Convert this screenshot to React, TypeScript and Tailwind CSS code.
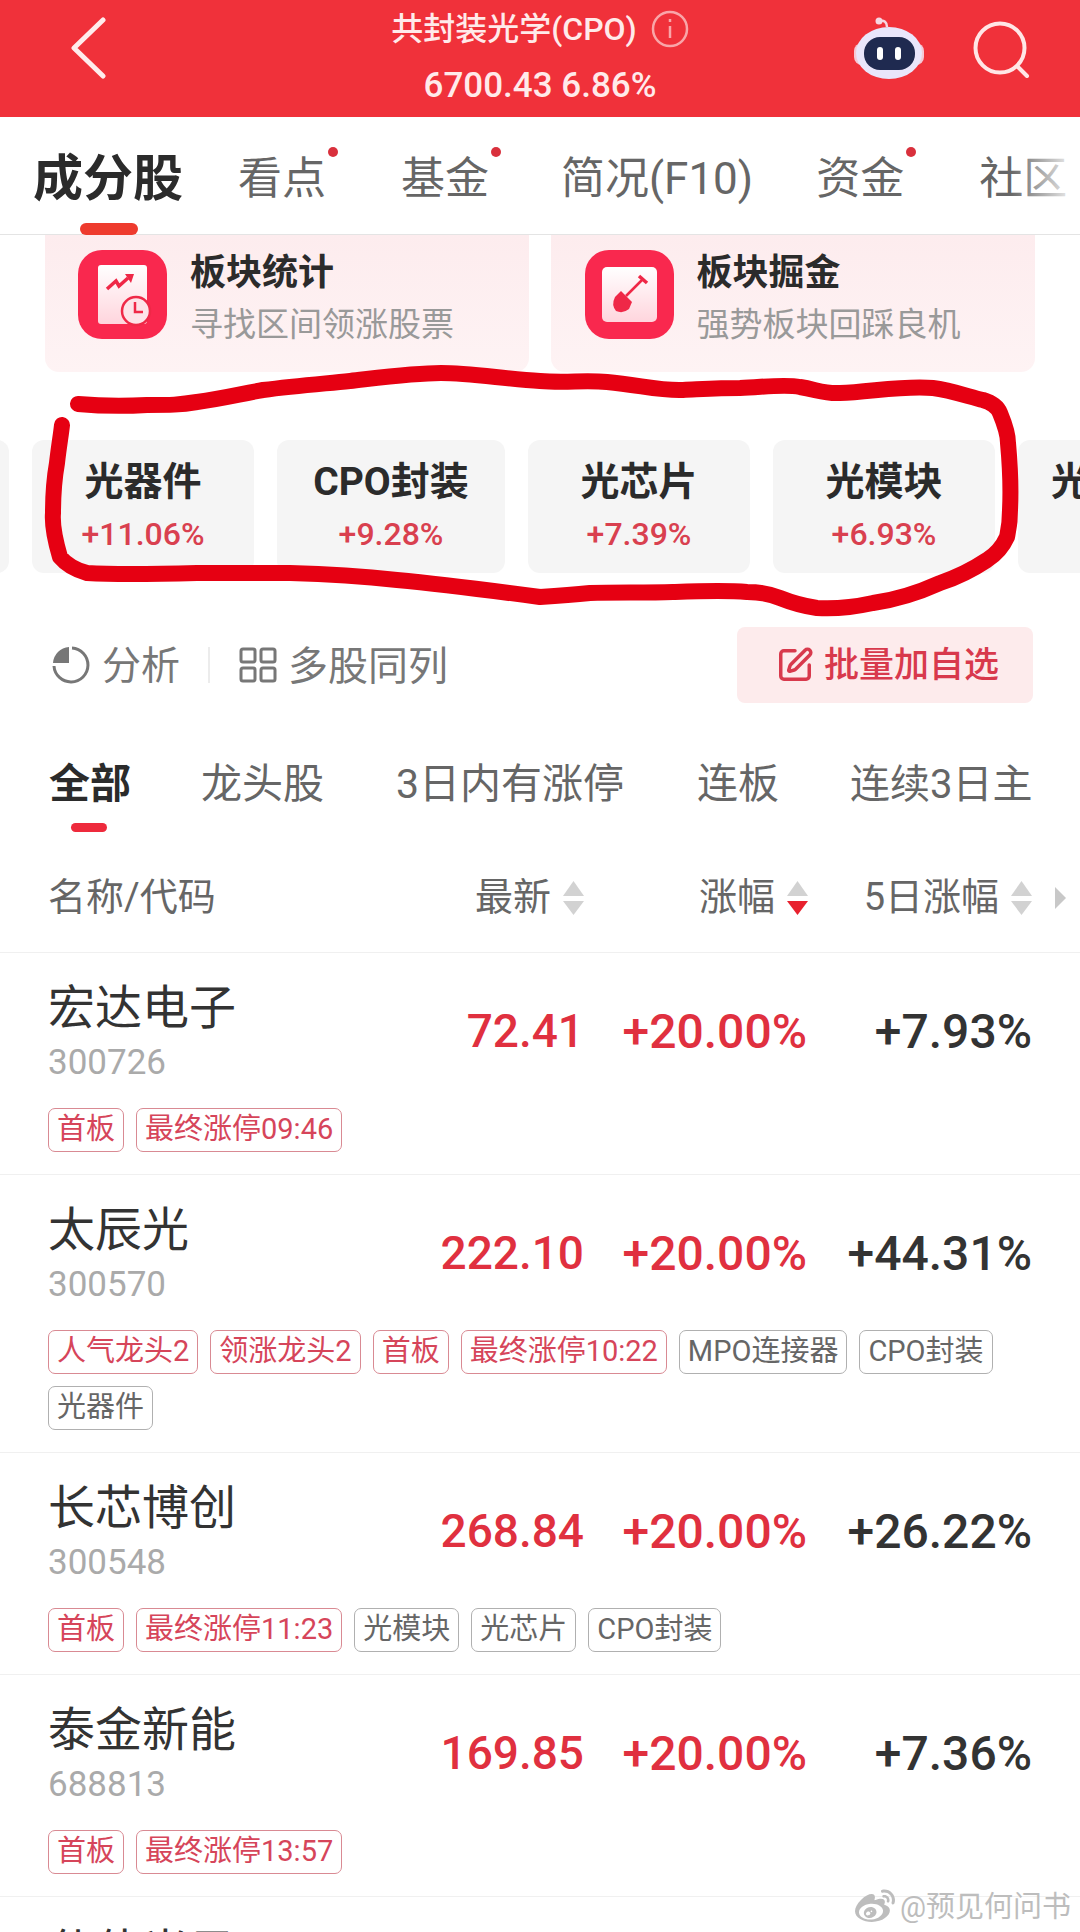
import React from 'react';
import { SquarePen } from 'lucide-react';
import { FaWeibo } from 'react-icons/fa';

type Tag = { label: string; hot?: boolean };
type Stock = { name: string; code: string; price: string; change: string; five: string; tags: Tag[] };

const CHIPS = [
  { name: '光器件', pct: '+11.06%', width: 'w-[222px]' },
  { name: 'CPO封装', pct: '+9.28%', width: 'w-[228px]' },
  { name: '光芯片', pct: '+7.39%', width: 'w-[222px]' },
  { name: '光模块', pct: '+6.93%', width: 'w-[222px]' },
];

const STOCKS: Stock[] = [
  {
    name: '宏达电子', code: '300726', price: '72.41', change: '+20.00%', five: '+7.93%',
    tags: [{ label: '首板', hot: true }, { label: '最终涨停09:46', hot: true }],
  },
  {
    name: '太辰光', code: '300570', price: '222.10', change: '+20.00%', five: '+44.31%',
    tags: [
      { label: '人气龙头2', hot: true }, { label: '领涨龙头2', hot: true }, { label: '首板', hot: true },
      { label: '最终涨停10:22', hot: true }, { label: 'MPO连接器' }, { label: 'CPO封装' }, { label: '光器件' },
    ],
  },
  {
    name: '长芯博创', code: '300548', price: '268.84', change: '+20.00%', five: '+26.22%',
    tags: [
      { label: '首板', hot: true }, { label: '最终涨停11:23', hot: true },
      { label: '光模块' }, { label: '光芯片' }, { label: 'CPO封装' },
    ],
  },
  {
    name: '泰金新能', code: '688813', price: '169.85', change: '+20.00%', five: '+7.36%',
    tags: [{ label: '首板', hot: true }, { label: '最终涨停13:57', hot: true }],
  },
];

const RobotIcon = () => (
  <svg width="70" height="62" viewBox="0 0 70 62" fill="none">
    <path d="M33 10 C33 5 30 3 26 4" stroke="#f6d7e2" strokeWidth="2.5" />
    <circle cx="25" cy="4" r="3.5" fill="#f6d7e2" />
    <rect x="0" y="26" width="70" height="22" rx="8" fill="#f5c9d6" />
    <ellipse cx="35" cy="36" rx="33" ry="26" fill="#e9e6fb" />
    <rect x="10" y="20" width="51" height="33" rx="16" fill="#1f2a50" />
    <rect x="23" y="30" width="6" height="13" rx="3" fill="#ffffff" />
    <rect x="41" y="30" width="6" height="13" rx="3" fill="#ffffff" />
  </svg>
);

const SearchIcon = () => (
  <svg width="58" height="58" viewBox="0 0 58 58" fill="none" stroke="#ffe6e6" strokeWidth="4" strokeLinecap="round">
    <circle cx="27" cy="27" r="24.5" />
    <path d="M45 46 L54 55" />
  </svg>
);

const StatIcon = () => (
  <svg width="89" height="89" viewBox="0 0 89 89" fill="none">
    <defs>
      <linearGradient id="stat-doc" x1="0" y1="0" x2="0" y2="1">
        <stop offset="0" stopColor="#ffffff" />
        <stop offset="1" stopColor="#ffd5dd" />
      </linearGradient>
    </defs>
    <rect width="89" height="89" rx="24" fill="#f9284e" />
    <rect x="20" y="15" width="49" height="59" rx="3" fill="url(#stat-doc)" />
    <path d="M29 39 L38 31 L41 36 L50 28" stroke="#ef2847" strokeWidth="3.5" />
    <path d="M47 24 L56 24 L53 33 Z" fill="#ef2847" />
    <circle cx="58" cy="61" r="14" fill="#fde3e8" stroke="#ef2847" strokeWidth="2.5" />
    <path d="M57 52 L57 62 L65 62" stroke="#ef2847" strokeWidth="2.5" />
  </svg>
);

const ShovelIcon = () => (
  <svg width="89" height="89" viewBox="0 0 89 89" fill="none">
    <defs>
      <linearGradient id="shovel-doc" x1="0" y1="0" x2="0" y2="1">
        <stop offset="0" stopColor="#ffffff" />
        <stop offset="1" stopColor="#ffd5dd" />
      </linearGradient>
    </defs>
    <rect width="89" height="89" rx="24" fill="#f9284e" />
    <rect x="17" y="17" width="55" height="55" rx="5" fill="url(#shovel-doc)" />
    <path d="M41 46 L58 29" stroke="#ef2847" strokeWidth="2.5" />
    <path d="M54 26 L62 33" stroke="#ef2847" strokeWidth="3.5" />
    <path d="M36 41 L47 52 L44 59 Q38 64 31 61 Q26 55 30 47 Z" fill="#ef2847" />
  </svg>
);

const SortArrows = ({ active }: { active?: boolean }) => (
  <svg width="21" height="34" viewBox="0 0 21 34" className="ml-[12px]">
    <path d="M10.5 0 L21 15 L0 15 Z" fill="#d2d2d2" />
    <path d="M0 20 L21 20 L10.5 34 Z" fill={active ? '#e8212e' : '#d2d2d2'} />
  </svg>
);

const StockRow = ({ stock }: { stock: Stock }) => (
  <div className="border-b border-[#f0f0f0] pl-[48px] pr-[48px] pt-[27px] pb-[22px]">
    <div className="grid grid-cols-[1fr_223px_225px] items-center">
      <div className="flex items-center justify-between">
        <div className="flex flex-col gap-[7px]">
          <div className="h-[56px] leading-[56px] text-[47px] text-[#333333]">{stock.name}</div>
          <div className="h-[40px] leading-[40px] text-[35px] text-[#aaaaaa]">{stock.code}</div>
        </div>
        <div className="text-[46px] font-medium text-[#e0303f]">{stock.price}</div>
      </div>
      <div className="text-right text-[48px] font-medium text-[#e0303f]">{stock.change}</div>
      <div className="text-right text-[48px] font-medium text-[#333333]">{stock.five}</div>
    </div>
    <div className="mt-[25px] flex flex-wrap gap-[12px]">
      {stock.tags.map((tag) => (
        <span
          key={tag.label}
          className={`flex h-[44px] items-center rounded-[7px] border px-[8px] text-[29px] ${tag.hot ? 'border-[#d98a93] text-[#d6455a]' : 'border-[#b0b0b0] text-[#666666]'}`}
        >
          {tag.label}
        </span>
      ))}
    </div>
  </div>
);

export default function App() {
  return (
    <div className="relative h-[1932px] w-[1080px] overflow-hidden bg-white font-['Roboto','Noto_Sans_CJK_SC',sans-serif]">
      {/* Top bar */}
      <div className="grid h-[117px] grid-cols-[250px_1fr_250px] bg-[#f0313a] text-[#ffeaea]">
        <div className="flex items-start pl-[70px] pt-[17px]">
          <svg width="36" height="62" viewBox="0 0 36 62" fill="none" stroke="#ffecec" strokeWidth="5" strokeLinecap="round" strokeLinejoin="round">
            <path d="M33 3 L4 31 L33 59" />
          </svg>
        </div>
        <div className="flex flex-col items-center pt-[7px]">
          <div className="flex h-[44px] items-center gap-[14px] text-[32px] font-medium whitespace-nowrap">
            共封装光学(CPO)
            <svg width="38" height="38" viewBox="0 0 38 38" fill="none" stroke="#f9a5a8" strokeWidth="2.5">
              <circle cx="19" cy="19" r="17" />
              <path d="M19 16 L19 28 M19 9 L19 12" />
            </svg>
          </div>
          <div className="mt-[13px] flex h-[44px] items-center text-[35px] font-medium whitespace-nowrap">6700.43 6.86%</div>
        </div>
        <div className="flex items-start justify-end gap-[49px] pr-[49px] pt-[17px]">
          <RobotIcon />
          <div className="pt-[4px]">
            <SearchIcon />
          </div>
        </div>
      </div>

      {/* Main tabs */}
      <div className="relative flex h-[118px] items-start border-b border-[#e4e4e4] pl-[33px] pt-[33px] whitespace-nowrap">
        <div className="relative text-[50px] leading-[58px] font-bold text-[#2b2b2b]">
          成分股
          <div className="absolute left-[47px] top-[73px] h-[12px] w-[58px] rounded-full bg-[#ee3b2e]" />
        </div>
        <div className="relative ml-[55px] text-[44px] leading-[58px] text-[#666666]">
          看点
          <span className="absolute right-[-12px] top-[-3px] h-[10px] w-[10px] rounded-full bg-[#d9303c]" />
        </div>
        <div className="relative ml-[75px] text-[44px] leading-[58px] text-[#666666]">
          基金
          <span className="absolute right-[-12px] top-[-3px] h-[10px] w-[10px] rounded-full bg-[#d9303c]" />
        </div>
        <div className="ml-[72px] text-[44px] leading-[58px] text-[#666666]">简况(F10)</div>
        <div className="relative ml-[63px] text-[44px] leading-[58px] text-[#666666]">
          资金
          <span className="absolute right-[-12px] top-[-3px] h-[10px] w-[10px] rounded-full bg-[#d9303c]" />
        </div>
        <div className="ml-[75px] text-[44px] leading-[58px] text-[#666666]">社区</div>
        <div className="absolute right-0 top-0 h-full w-[70px] bg-gradient-to-r from-transparent to-white" />
      </div>

      {/* Feature cards */}
      <div className="flex h-[137px] gap-[22px] px-[45px]">
        <div className="flex flex-1 items-start gap-[23px] rounded-b-[14px] bg-gradient-to-b from-[#fdecee] to-[#fef3f4] pl-[33px] pt-[15px]">
          <StatIcon />
          <div className="pt-[1px]">
            <div className="text-[36px] leading-[44px] font-bold text-[#2b2b2b]">板块统计</div>
            <div className="mt-[8px] text-[33px] leading-[44px] text-[#999999] whitespace-nowrap">寻找区间领涨股票</div>
          </div>
        </div>
        <div className="flex flex-1 items-start gap-[23px] rounded-b-[14px] bg-gradient-to-b from-[#fdecee] to-[#fef3f4] pl-[34px] pt-[15px]">
          <ShovelIcon />
          <div className="pt-[1px]">
            <div className="text-[36px] leading-[44px] font-bold text-[#2b2b2b]">板块掘金</div>
            <div className="mt-[8px] text-[33px] leading-[44px] text-[#999999] whitespace-nowrap">强势板块回踩良机</div>
          </div>
        </div>
      </div>

      {/* Sub sector chips */}
      <div className="mt-[68px] flex h-[133px] gap-[23px] overflow-hidden">
        <div className="ml-[-91px] w-[100px] shrink-0 rounded-[12px] bg-[#f5f5f5]" />
        {CHIPS.map((chip) => (
          <div key={chip.name} className={`flex shrink-0 flex-col items-center rounded-[12px] bg-[#f5f5f5] pt-[16px] ${chip.width}`}>
            <div className="text-[39px] leading-[52px] font-bold text-[#2b2b2b]">{chip.name}</div>
            <div className="mt-[8px] text-[32px] leading-[36px] font-medium text-[#d9404f]">{chip.pct}</div>
          </div>
        ))}
        <div className="flex w-[222px] shrink-0 flex-col rounded-[12px] bg-[#f5f5f5] pl-[33px] pt-[16px]">
          <div className="text-[39px] leading-[52px] font-bold text-[#2b2b2b]">光</div>
        </div>
      </div>

      {/* Actions */}
      <div className="mt-[54px] flex h-[76px] items-center justify-between pl-[52px] pr-[47px]">
        <div className="flex items-center text-[39px] text-[#777777]">
          <svg width="38" height="38" viewBox="0 0 38 38" fill="none">
            <path d="M20 2 A17 17 0 1 1 2 20" stroke="#777777" strokeWidth="3" />
            <path d="M17 1 L17 17 L1 17 A17 17 0 0 1 17 1 Z" fill="#777777" />
          </svg>
          <span className="ml-[12px] pt-[3px]">分析</span>
          <span className="ml-[28px] h-[36px] w-[2px] bg-[#ececec]" />
          <svg width="38" height="36" viewBox="0 0 38 36" fill="none" stroke="#777777" strokeWidth="3" className="ml-[29px]">
            <rect x="2" y="2" width="14" height="13" rx="2" />
            <rect x="22" y="2" width="14" height="13" rx="2" />
            <rect x="2" y="21" width="14" height="13" rx="2" />
            <rect x="22" y="21" width="14" height="13" rx="2" />
          </svg>
          <span className="ml-[11px] pt-[3px] text-[40px]">多股同列</span>
        </div>
        <div className="flex h-[76px] w-[296px] items-center rounded-[8px] bg-[#fdebec] pl-[39px] text-[35px] font-medium text-[#d8394c]">
          <SquarePen size={38} strokeWidth={2.2} />
          <span className="ml-[10px] pt-[3px] whitespace-nowrap">批量加自选</span>
        </div>
      </div>

      {/* Stock filters */}
      <div className="mt-[55px] flex h-[53px] items-center pl-[49px] text-[41px] leading-[53px] whitespace-nowrap text-[#666666]">
        <span className="font-bold text-[#2b2b2b]">全部</span>
        <span className="ml-[70px]">龙头股</span>
        <span className="ml-[72px]">3日内有涨停</span>
        <span className="ml-[73px]">连板</span>
        <span className="ml-[71px] text-[40px]">连续3日主</span>
      </div>
      <div className="ml-[71px] mt-[12px] h-[9px] w-[36px] rounded-full bg-[#ee2a3c]" />

      {/* Table header */}
      <div className="grid h-[121px] grid-cols-[1fr_224px_224px_224px_34px] items-center border-b border-[#f0f0f0] pl-[48px] pr-[14px] pt-[11px] text-[38px] text-[#666666]">
        <div>名称/代码</div>
        <div className="flex items-center justify-end">最新<SortArrows /></div>
        <div className="flex items-center justify-end">涨幅<SortArrows active /></div>
        <div className="flex items-center justify-end">5日涨幅<SortArrows /></div>
        <div className="flex justify-end">
          <svg width="11" height="22" viewBox="0 0 11 22">
            <path d="M0 0 L11 11 L0 22 Z" fill="#c8c8c8" />
          </svg>
        </div>
      </div>

      {STOCKS.map((stock) => (
        <StockRow key={stock.code} stock={stock} />
      ))}
      <div className="pl-[48px] pt-[27px] text-[47px] leading-[56px] text-[#333333]">仕佳光子</div>

      {/* Hand drawn marker around the chips */}
      <svg className="pointer-events-none absolute left-0 top-0" width="1080" height="640" viewBox="0 0 1080 640" fill="none" stroke="#e60012" strokeWidth="16" strokeLinecap="round" strokeLinejoin="round">
        <path d="M78 404 C100 406 130 406 147 405 C170 405 180 405 197 402 C225 398 240 394 263 390 C295 386 320 384 350 381 C385 377 415 373 441 373 C470 373 505 379 540 381 C565 383 585 380 607 382 C640 385 660 391 683 390 C705 389 720 388 740 388 C765 387 785 384 800 387 C818 390 825 394 840 393 C870 392 905 385 933 388 C950 390 970 397 983 400 C993 403 998 408 1000 413 C1005 425 1008 435 1008 443 C1010 465 1011 490 1010 510 C1010 525 1008 532 1007 537 C1002 548 995 555 987 560 C972 570 955 578 940 583 C920 592 895 600 873 603 C850 608 832 609 817 608 C803 606 795 604 780 598 C768 593 758 592 747 592 C725 590 700 591 673 592 C645 593 615 592 590 593 C570 595 555 596 540 597 C495 591 440 584 397 580 C360 576 325 574 290 573 C260 573 225 573 197 573 C160 574 120 575 87 573 C72 569 65 563 60 557 C55 540 52 525 53 513 C53 495 54 480 57 463 C59 445 61 435 62 425" />
      </svg>

      {/* Weibo watermark */}
      <div className="absolute bottom-[5px] right-[9px] flex items-center gap-[5px] text-[29px] leading-[40px] text-[#bdbdbd] whitespace-nowrap">
        <FaWeibo size={40} />
        @预见何问书
      </div>
    </div>
  );
}
